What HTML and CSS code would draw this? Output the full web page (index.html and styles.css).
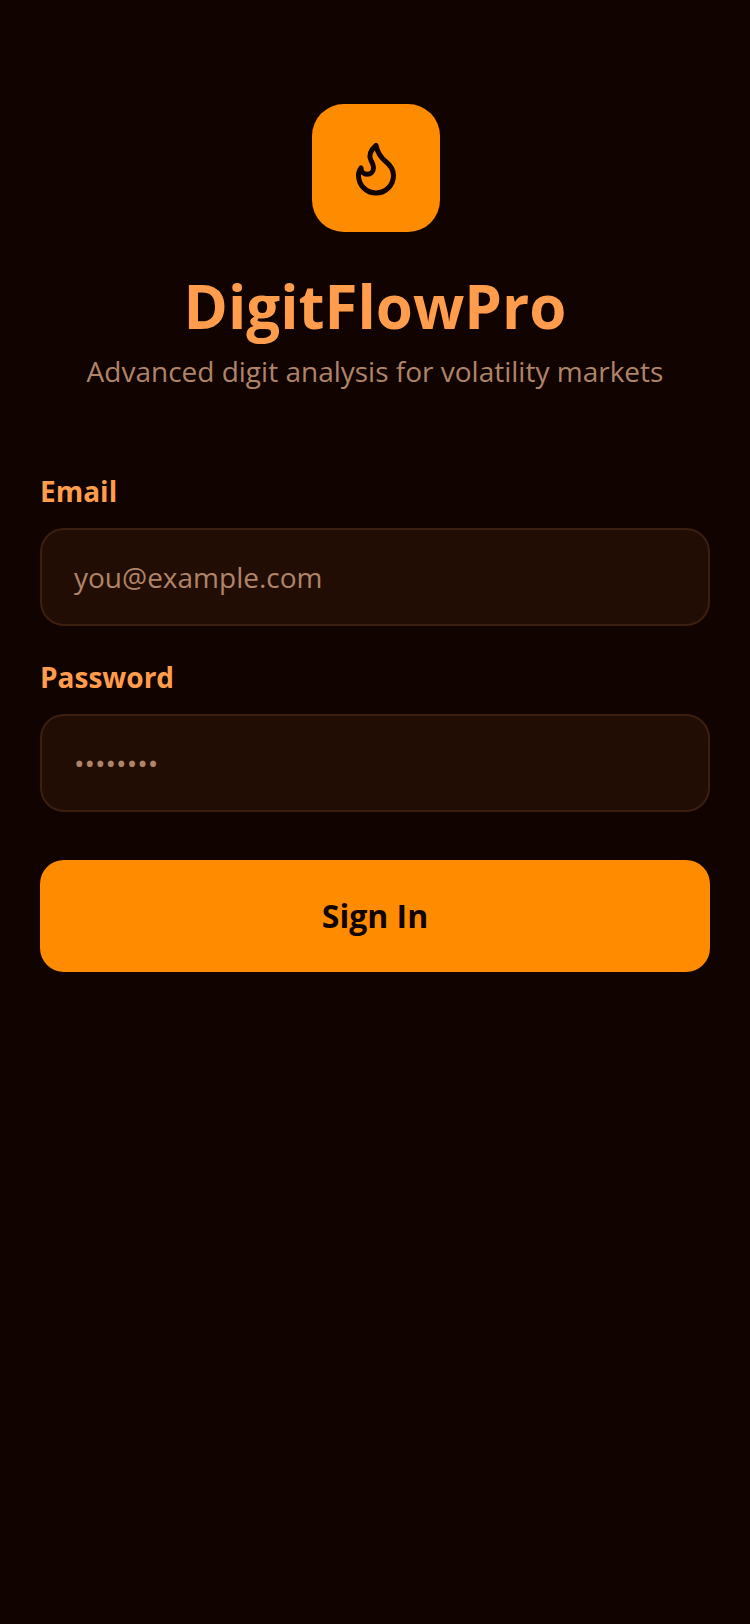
FILE: index.html
```html
<!DOCTYPE html>
<html lang="en">
<head>
<meta charset="utf-8">
<title>DigitFlowPro</title>
<link rel="stylesheet" href="styles.css">
</head>
<body>
<main class="screen">
  <header class="brand">
    <div class="logo">
      <svg class="flame" viewBox="0 0 24 24" fill="none" stroke="currentColor" stroke-width="2" stroke-linecap="round" stroke-linejoin="round"><path d="M8.5 14.5A2.5 2.5 0 0 0 11 12c0-1.38-.5-2-1-3-1.072-2.143-.224-4.054 2-6 .5 2.5 2 4.9 4 6.5 2 1.6 3 3.5 3 5.5a7 7 0 1 1-14 0c0-1.153.433-2.294 1-3a2.5 2.5 0 0 0 2.5 2.5z"/></svg>
    </div>
    <h1 class="title">DigitFlowPro</h1>
    <p class="subtitle">Advanced digit analysis for volatility markets</p>
  </header>
  <form class="form">
    <div class="field">
      <label class="label" for="email">Email</label>
      <input class="input" id="email" type="email" placeholder="you@example.com">
    </div>
    <div class="field">
      <label class="label" for="password">Password</label>
      <input class="input" id="password" type="password" placeholder="••••••••">
    </div>
    <button class="submit" type="button">Sign In</button>
  </form>
</main>
</body>
</html>
```
FILE: styles.css
```css
* { box-sizing: border-box; }
html, body { margin: 0; height: 100%; }
body {
  background: #100300;
  font-family: "Open Sans", sans-serif;
}
.screen {
  min-height: 1624px;
  padding: 104px 40px 0;
}
.brand {
  display: flex;
  flex-direction: column;
  align-items: center;
}
.logo {
  width: 128px;
  height: 128px;
  margin-left: 2px;
  border-radius: 32px;
  background: #ff8c00;
  color: #100300;
  display: flex;
  align-items: center;
  justify-content: center;
}
.flame { width: 60px; height: 60px; display: block; }
.title {
  margin: 38px 0 0;
  font-size: 60px;
  line-height: 72px;
  font-weight: 700;
  color: #ff9d4d;
}
.subtitle {
  margin: 9px 0 0;
  font-size: 28px;
  line-height: 40px;
  color: #b08468;
}
.form {
  margin-top: 81px;
  display: flex;
  flex-direction: column;
  gap: 32px;
}
.field { display: flex; flex-direction: column; gap: 18px; }
.label {
  font-size: 28px;
  line-height: 38px;
  font-weight: 700;
  color: #ff9d4d;
}
.input {
  width: 100%;
  height: 98px;
  padding: 0 32px;
  border: 2px solid #3d1f10;
  border-radius: 24px;
  background: #210d04;
  font: 28px "Open Sans", sans-serif;
  color: #b08468;
  outline: none;
}
.input::placeholder { color: #b08468; opacity: 1; }
.submit {
  margin-top: 16px;
  height: 112px;
  padding: 0 0 2px;
  border: 0;
  border-radius: 24px;
  background: #ff8c00;
  color: #100300;
  font: 700 32px "Open Sans", sans-serif;
}
```
